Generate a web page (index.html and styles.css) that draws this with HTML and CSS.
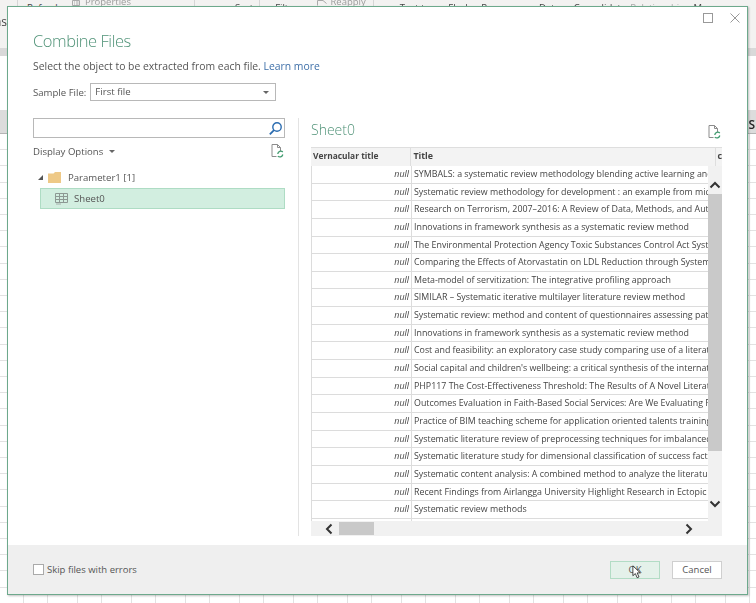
FILE: index.html
```html
<!DOCTYPE html>
<html lang="en">
<head>
  <meta charset="UTF-8">
  <meta name="viewport" content="width=device-width, initial-scale=1.0">
  <title>Combine Files</title>
  <link rel="stylesheet" href="styles.css">
</head>
<body>
  <!-- excel window behind the dialog -->
  <div class="sheet">
    <div class="ribbon">
      <div class="ribbon-row">
        <span class="rb-text rb-refresh">Refresh</span>
        <svg class="rb-icon rb-props-icon" width="8" height="6" viewBox="0 0 8 6"><path d="M.5 .5H7.5V5.5H.5ZM2 2H3M4 2H6.5M2 4H3M4 4H6.5" fill="none" stroke="#aaa"/></svg>
        <span class="rb-text rb-grey rb-props">Properties</span>
        <span class="rb-text rb-sort">Sort</span>
        <span class="rb-text rb-filter">Filter</span>
        <svg class="rb-icon rb-reapply-icon" width="10" height="6" viewBox="0 0 10 6"><path d="M.5 5.5V.5H6L9.5 3.5" fill="none" stroke="#aaa"/></svg>
        <span class="rb-text rb-grey rb-reapply">Reapply</span>
        <span class="rb-text rb-textto">Text to</span>
        <span class="rb-text rb-flash">Flash</span>
        <span class="rb-text rb-rem">Remove</span>
        <span class="rb-text rb-data">Data</span>
        <span class="rb-text rb-cons">Consolidate</span>
        <span class="rb-text rb-rel">Relationships</span>
        <span class="rb-text rb-man">Manage</span>
      </div>
      <div class="ribbon-label">ns</div>
    </div>
    <div class="formula-strip"></div>
    <div class="formula-gap"></div>
    <div class="col-head"><span>S</span></div>
    <div class="cells"></div>
  </div>

  <div class="dialog">
    <div class="win-buttons">
      <svg width="10" height="10" viewBox="0 0 10 10"><rect x="0.5" y="0.5" width="9" height="9" fill="none" stroke="#999"/></svg>
      <svg width="10" height="10" viewBox="0 0 10 10"><path d="M0.5 0.5L9.5 9.5M9.5 0.5L0.5 9.5" fill="none" stroke="#999"/></svg>
    </div>

    <div class="dialog-body">
      <h1>Combine Files</h1>
      <p class="intro">Select the object to be extracted from each file. <a href="#">Learn more</a></p>
      <div class="sample">
        <label>Sample File:</label>
        <div class="select">First file<span class="caret"></span></div>
      </div>

      <div class="panes">
        <div class="left-pane">
          <div class="search">
            <svg width="15" height="15" viewBox="0 0 15 15"><circle cx="9" cy="6" r="4.2" fill="none" stroke="#2b6cb0" stroke-width="1.4"/><path d="M6 9.2L1.8 13.4" stroke="#2b6cb0" stroke-width="1.8"/></svg>
          </div>
          <div class="display-row">
            <span class="display-label">Display Options<span class="caret"></span></span>
            <svg class="doc-icon" width="13" height="14" viewBox="0 0 13 14"><path d="M1 .5H6.5L9.5 3.5V7M1 .5V12.5H5.5M6.5 .5V3.5H9.5" fill="none" stroke="#8c8c8c"/><path d="M6.8 10a3 3 0 0 1 5-2M11.8 10.5a3 3 0 0 1-5 1.6" fill="none" stroke="#3f9a6e" stroke-width="1.3"/></svg>
          </div>
          <div class="tree-parent">
            <span class="tree-arrow"></span>
            <svg width="13" height="11" viewBox="0 0 13 11"><path d="M0 1.5H5.5L7 0H13V11H0Z" fill="#eec987"/></svg>
            <span>Parameter1 [1]</span>
          </div>
          <div class="tree-item">
            <svg width="13" height="12" viewBox="0 0 13 12"><path d="M.5 .5H12.5V9.5H.5ZM.5 3.5H12.5M.5 6.5H12.5M4.5 .5V9.5M8.5 .5V9.5" fill="none" stroke="#8d9994"/><path d="M1 11H6" stroke="#a5aeaa"/></svg>
            <span>Sheet0</span>
          </div>
        </div>

        <div class="right-pane">
          <div class="preview-head">
            <h2>Sheet0</h2>
            <svg class="doc-icon" width="13" height="14" viewBox="0 0 13 14"><path d="M1 .5H6.5L9.5 3.5V7M1 .5V12.5H5.5M6.5 .5V3.5H9.5" fill="none" stroke="#8c8c8c"/><path d="M6.8 10a3 3 0 0 1 5-2M11.8 10.5a3 3 0 0 1-5 1.6" fill="none" stroke="#3f9a6e" stroke-width="1.3"/></svg>
          </div>

          <div class="grid">
            <div class="grid-head">
              <div class="c-vern">Vernacular title</div>
              <div class="c-title">Title</div>
              <div class="c-more">c</div>
            </div>
            <div class="grid-mid">
              <div class="rows">
                <div class="row"><i>null</i><span>SYMBALS: a systematic review methodology blending active learning and</span></div>
                <div class="row"><i>null</i><span>Systematic review methodology for development : an example from mid</span></div>
                <div class="row"><i>null</i><span>Research on Terrorism, 2007–2016: A Review of Data, Methods, and Authors</span></div>
                <div class="row"><i>null</i><span>Innovations in framework synthesis as a systematic review method</span></div>
                <div class="row"><i>null</i><span>The Environmental Protection Agency Toxic Substances Control Act Systematic</span></div>
                <div class="row"><i>null</i><span>Comparing the Effects of Atorvastatin on LDL Reduction through Systematic</span></div>
                <div class="row"><i>null</i><span>Meta-model of servitization: The integrative profiling approach</span></div>
                <div class="row"><i>null</i><span>SIMILAR – Systematic iterative multilayer literature review method</span></div>
                <div class="row"><i>null</i><span>Systematic review: method and content of questionnaires assessing patient</span></div>
                <div class="row"><i>null</i><span>Innovations in framework synthesis as a systematic review method</span></div>
                <div class="row"><i>null</i><span>Cost and feasibility: an exploratory case study comparing use of a literature</span></div>
                <div class="row"><i>null</i><span>Social capital and children's wellbeing: a critical synthesis of the international</span></div>
                <div class="row"><i>null</i><span>PHP117 The Cost-Effectiveness Threshold: The Results of A Novel Literature</span></div>
                <div class="row"><i>null</i><span>Outcomes Evaluation in Faith-Based Social Services: Are We Evaluating Faith</span></div>
                <div class="row"><i>null</i><span>Practice of BIM teaching scheme for application oriented talents training</span></div>
                <div class="row"><i>null</i><span>Systematic literature review of preprocessing techniques for imbalanced</span></div>
                <div class="row"><i>null</i><span>Systematic literature study for dimensional classification of success factors</span></div>
                <div class="row"><i>null</i><span>Systematic content analysis: A combined method to analyze the literature</span></div>
                <div class="row"><i>null</i><span>Recent Findings from Airlangga University Highlight Research in Ectopic</span></div>
                <div class="row"><i>null</i><span>Systematic review methods</span></div>
                <div class="row"><i></i><span></span></div>
              </div>
              <div class="vscroll">
                <svg width="12" height="8" viewBox="0 0 12 8"><path d="M1.5 6.5L6 2L10.5 6.5" fill="none" stroke="#333" stroke-width="2"/></svg>
                <div class="vthumb"></div>
                <svg width="12" height="8" viewBox="0 0 12 8"><path d="M1.5 1.5L6 6L10.5 1.5" fill="none" stroke="#333" stroke-width="2"/></svg>
              </div>
            </div>
            <div class="hscroll">
              <svg width="8" height="12" viewBox="0 0 8 12"><path d="M6.5 1.5L2 6L6.5 10.5" fill="none" stroke="#333" stroke-width="2"/></svg>
              <div class="hthumb"></div>
              <svg class="h-next" width="8" height="12" viewBox="0 0 8 12"><path d="M1.5 1.5L6 6L1.5 10.5" fill="none" stroke="#333" stroke-width="2"/></svg>
            </div>
          </div>
        </div>
      </div>
    </div>

    <div class="footer">
      <label class="skip"><span class="check"></span>Skip files with errors</label>
      <div class="actions">
        <button class="btn btn-ok">OK</button>
        <button class="btn">Cancel</button>
      </div>
    </div>

    <svg class="cursor" width="10" height="14" viewBox="0 0 12 17"><path d="M1 1V13L4 10.4L6.2 15.5L8.4 14.5L6.2 9.6H10Z" fill="#fff" stroke="#222" stroke-width="1"/></svg>
  </div>
</body>
</html>
```

FILE: styles.css
```css
body {
  margin: 0;
  width: 756px;
  height: 603px;
  position: relative;
  overflow: hidden;
  font-family: "Open Sans", "Noto Sans", sans-serif;
  color: #555;
  background: #fff;
}

/* sheet behind the dialog */
.sheet {
  height: 603px;
  display: flex;
  flex-direction: column;
  filter: blur(0.4px);
}

.ribbon {
  height: 48px;
  background: #f3f2f1;
  font-size: 9.5px;
  color: #444;
}

.ribbon-row {
  display: flex;
  height: 15px;
  padding-top: 1px;
  box-sizing: border-box;
  line-height: 14px;
  background-image:
    linear-gradient(#d6d6d6, #d6d6d6), linear-gradient(#d6d6d6, #d6d6d6),
    linear-gradient(#d6d6d6, #d6d6d6), linear-gradient(#d6d6d6, #d6d6d6);
  background-size: 1px 100%;
  background-repeat: no-repeat;
  background-position: 17px 0, 194px 0, 259px 0, 373px 0;
}

.rb-text { white-space: nowrap; }
.rb-grey { color: #9c9c9c; margin-top: -6px; }
.rb-icon { margin-top: -1px; }
.rb-refresh { margin-left: 27px; }
.rb-props-icon { margin-left: 11px; }
.rb-props { margin-left: 5px; }
.rb-sort { margin-left: 104px; }
.rb-filter { margin-left: 22px; }
.rb-reapply-icon { margin-left: 20px; }
.rb-reapply { margin-left: 3px; }
.rb-textto { margin-left: 34px; }
.rb-flash { margin-left: 18px; }
.rb-rem { margin-left: 10px; }
.rb-data { margin-left: 22px; }
.rb-cons { margin-left: 14px; }
.rb-rel { margin-left: 4px; color: #aaa; }
.rb-man { margin-left: 4px; }

.ribbon-label {
  font-size: 12px;
  line-height: 16px;
  margin-top: -1px;
  margin-left: -6px;
}

.formula-strip {
  height: 8px;
  background: #d9d9d9;
}

.formula-gap {
  height: 54px;
  background: #fff;
}

.col-head {
  height: 23px;
  background: #dcdcdc;
  border-bottom: 1px solid #b5b5b5;
  display: flex;
  justify-content: flex-end;
  align-items: flex-end;
  padding-right: 1px;
  font-size: 12px;
  line-height: 16px;
  font-weight: 600;
  color: #222;
}

.cells {
  flex: 1;
  background-color: #fff;
  background-image:
    repeating-linear-gradient(to bottom, transparent 0, transparent 15.2px, #e2e2e2 15.2px, #e2e2e2 16.2px),
    repeating-linear-gradient(to right, transparent 0, transparent 23px, #e2e2e2 23px, #e2e2e2 24px, transparent 24px, transparent 24px);
  background-size: 100% 100%, 54px 100%;
}

/* dialog */
.dialog {
  position: absolute;
  left: 7px;
  top: 6px;
  width: 739px;
  height: 587px;
  background: #fff;
  border: 1px solid #6da98c;
  box-shadow: 1px 1px 2px rgba(0, 0, 0, 0.25);
  display: flex;
  flex-direction: column;
  filter: blur(0.4px);
}

.win-buttons {
  position: absolute;
  top: 6px;
  right: 7px;
  display: flex;
  gap: 17px;
  align-items: center;
}

.dialog-body {
  flex: 1;
  padding: 23px 25px 0;
  display: flex;
  flex-direction: column;
}

h1 {
  margin: 0;
  font-size: 16.5px;
  line-height: 22px;
  font-weight: 300;
  letter-spacing: -0.45px;
  color: #4f9277;
}

.intro {
  margin: 6px 0 0;
  font-size: 10.4px;
  line-height: 16px;
}

.intro a {
  color: #3e6fa8;
  text-decoration: none;
}

.sample {
  display: flex;
  align-items: center;
  gap: 4px;
  margin-top: 9px;
  font-size: 9.6px;
}

.select {
  width: 177px;
  height: 16px;
  line-height: 16px;
  padding-left: 4px;
  padding-right: 3px;
  border: 1px solid #b8b8b8;
  display: flex;
  justify-content: space-between;
  align-items: center;
}

.caret {
  width: 0;
  height: 0;
  margin-right: 3px;
  border-left: 3px solid transparent;
  border-right: 3px solid transparent;
  border-top: 3px solid #666;
}

.panes {
  flex: 1;
  display: flex;
  margin-top: 17px;
  margin-bottom: 9px;
}

.left-pane {
  width: 252px;
  padding-right: 13px;
  border-right: 1px solid #e3e3e3;
  flex-shrink: 0;
  font-size: 9.6px;
}

.search {
  height: 18px;
  border: 1px solid #b8b8b8;
  display: flex;
  justify-content: flex-end;
  align-items: center;
  padding-right: 1px;
}

.display-row {
  display: flex;
  justify-content: space-between;
  align-items: center;
  margin-top: 5px;
  padding-right: 1px;
  height: 16px;
}

.display-label {
  display: flex;
  align-items: center;
  gap: 6px;
}

.tree-parent {
  display: flex;
  align-items: center;
  gap: 5px;
  margin-top: 10px;
  padding-left: 5px;
  height: 16px;
}

.tree-parent span:last-child { margin-left: 2px; }

.tree-arrow {
  width: 0;
  height: 0;
  border-left: 5px solid transparent;
  border-bottom: 5px solid #555;
}

.tree-item {
  display: flex;
  align-items: center;
  gap: 6px;
  margin-left: 7px;
  margin-top: 3px;
  height: 19px;
  padding-left: 14px;
  background: #d2eee0;
  border: 1px solid #aedcc4;
}

.right-pane {
  flex: 1;
  padding-left: 12px;
  min-width: 0;
}

.preview-head {
  display: flex;
  justify-content: space-between;
  align-items: flex-end;
  height: 23px;
  padding-right: 1px;
}

.preview-head .doc-icon { margin-bottom: 2px; }

h2 {
  margin: 0;
  font-size: 14px;
  font-weight: 300;
  line-height: 22px;
  color: #4f9277;
}

.grid {
  margin-top: 6px;
  width: 411px;
  font-size: 8.85px;
  color: #444;
}

.grid-head {
  display: flex;
  height: 18px;
  line-height: 16px;
  background: #f3f3f3;
  border-top: 1px solid #dedede;
  font-weight: 700;
  overflow: hidden;
}

.c-vern {
  width: 101px;
  font-size: 8.4px;
  padding-left: 2px;
  box-sizing: border-box;
  border-right: 1px solid #dedede;
}

.c-title {
  width: 307px;
  padding-left: 2px;
  box-sizing: border-box;
  border-right: 1px solid #dedede;
}

.c-more { padding-left: 1px; }

.grid-mid {
  display: flex;
  height: 355px;
}

.rows {
  width: 397px;
  overflow: hidden;
}

.row {
  display: flex;
  height: 17.65px;
  line-height: 16px;
  box-sizing: border-box;
  border-bottom: 1px solid #dcdcdc;
  border-left: 1px solid #dcdcdc;
  white-space: nowrap;
}

.row i {
  width: 100px;
  flex-shrink: 0;
  box-sizing: border-box;
  text-align: right;
  padding-right: 2px;
  border-right: 1px solid #dcdcdc;
}

.row span { padding-left: 2px; }

.vscroll {
  width: 14px;
  background: #f1f1f1;
  display: flex;
  flex-direction: column;
  align-items: center;
}

.vscroll svg { margin: 15px 0 5px; flex-shrink: 0; }

.vthumb {
  width: 100%;
  height: 257px;
  background: #c9c9c9;
}

.vscroll svg:last-child { margin: 49px 0 0; }

.hscroll {
  height: 15px;
  background: #f1f1f1;
  display: flex;
  align-items: center;
  padding-left: 14px;
}

.hthumb {
  width: 35px;
  height: 13px;
  margin-left: 6px;
  background: #c9c9c9;
}

.h-next { margin-left: 311px; }

.footer {
  height: 49px;
  flex-shrink: 0;
  background: #efefef;
  display: flex;
  justify-content: space-between;
  align-items: center;
  padding: 0 25px;
  font-size: 9.5px;
}

.skip {
  display: flex;
  align-items: center;
  gap: 3px;
}

.check {
  width: 9px;
  height: 9px;
  background: #fff;
  border: 1px solid #aaa;
}

.actions {
  display: flex;
  gap: 12px;
}

.btn {
  width: 50px;
  height: 18px;
  padding: 0;
  font-family: inherit;
  font-size: 9.5px;
  color: #555;
  background: #fff;
  border: 1px solid #cfcfcf;
}

.btn-ok {
  background: #e4f1ea;
  border-color: #b2dcc5;
}

.cursor {
  position: absolute;
  left: 624px;
  top: 558px;
}
```
